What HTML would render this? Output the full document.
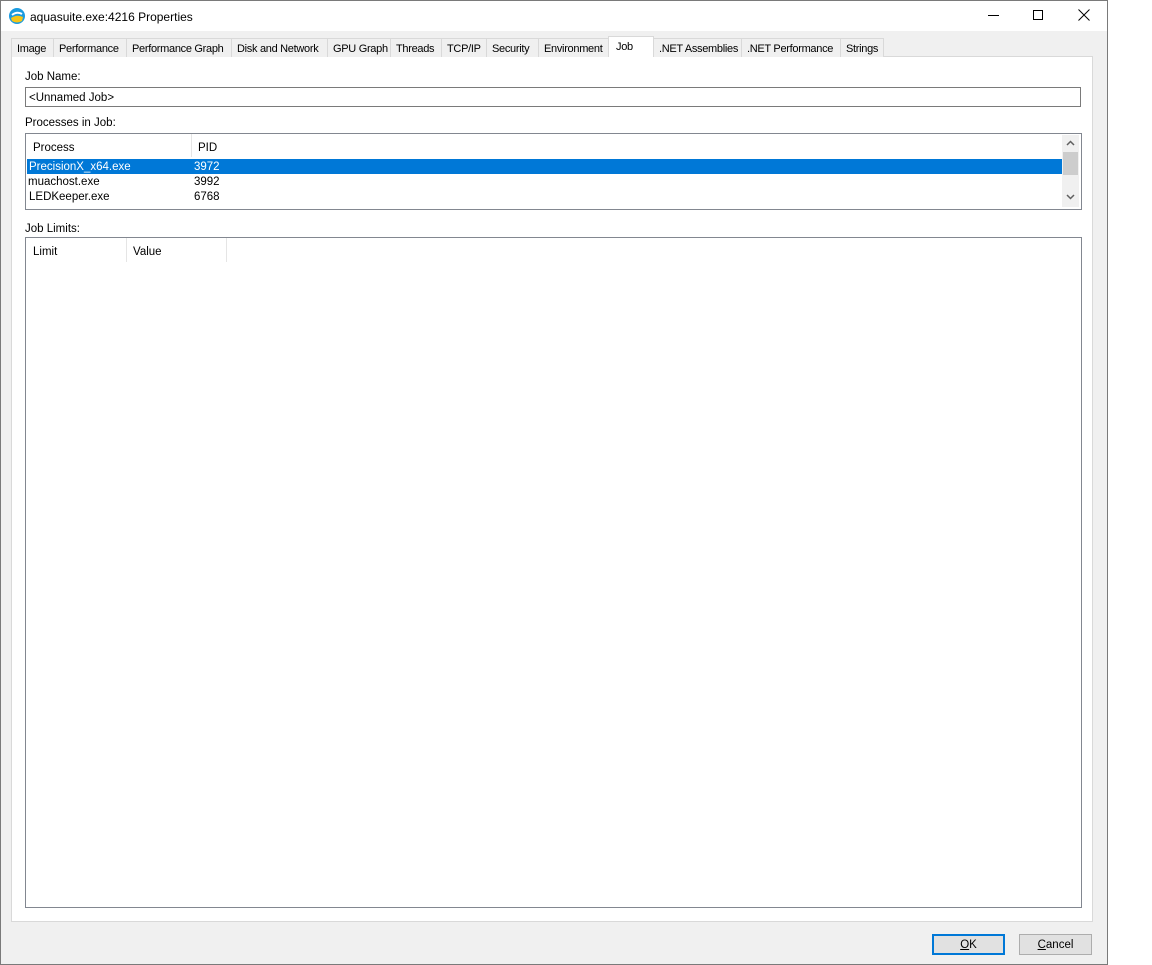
<!DOCTYPE html>
<html><head><style>
*{box-sizing:border-box;margin:0;padding:0}
body{width:1152px;height:965px;background:#fff;position:relative;overflow:hidden;font-family:"Liberation Sans",sans-serif;font-size:11.5px;color:#000}
.a{position:absolute}
.win{left:0;top:0;width:1108px;height:965px;background:#f0f0f0;border:1px solid #7a7a7a;border-top:1px solid #7a7a7a}
.title{left:1px;top:1px;width:1106px;height:30px;background:#fff}
.tab{top:38px;height:19px;border:1px solid #d9d9d9;border-bottom:none;background:#f0f0f0;padding:4px 0 0 5px;white-space:nowrap;font-size:11px;letter-spacing:-0.3px;overflow:hidden}
.panel{left:11px;top:56px;width:1082px;height:866px;background:#fff;border:1px solid #d9d9d9}
.box{border:1px solid #828790;background:#fff}
.btn{top:934px;width:73px;height:21px;background:#e1e1e1;border:1px solid #adadad;text-align:center;padding-top:4px}
.t{margin-top:1px}
</style></head><body>
<div class="a win"></div>
<div class="a title"></div>
<svg class="a" style="left:8px;top:7px" width="18" height="18" viewBox="0 0 18 18"><circle cx="9" cy="9" r="8" fill="#1a9be0"/><path d="M3 11 Q9 7 15 10 L14 14 Q9 17 4 14Z" fill="#f5c518"/><path d="M4 8 Q9 4 14 7" stroke="#fff" stroke-width="2" fill="none"/></svg>
<div class="a" style="left:30px;top:10px;font-size:12px">aquasuite.exe:4216 Properties</div>
<div class="a" style="left:988px;top:15px;width:11px;height:1px;background:#000"></div>
<div class="a" style="left:1033px;top:10px;width:10px;height:10px;border:1px solid #000"></div>
<svg class="a" style="left:1078px;top:9px" width="12" height="12"><path d="M0.5 0.5L11.5 11.5M11.5 0.5L0.5 11.5" stroke="#000"/></svg>
<div class="a panel"></div>
<div class="a tab" style="left:11px;width:43px">Image</div>
<div class="a tab" style="left:53px;width:74px">Performance</div>
<div class="a tab" style="left:126px;width:106px">Performance Graph</div>
<div class="a tab" style="left:231px;width:97px">Disk and Network</div>
<div class="a tab" style="left:327px;width:64px">GPU Graph</div>
<div class="a tab" style="left:390px;width:52px">Threads</div>
<div class="a tab" style="left:441px;width:46px">TCP/IP</div>
<div class="a tab" style="left:486px;width:53px">Security</div>
<div class="a tab" style="left:538px;width:71px">Environment</div>
<div class="a tab" style="left:608px;top:36px;width:46px;height:21px;background:#fff;padding-top:4px;padding-left:7px">Job</div>
<div class="a tab" style="left:653px;width:89px">.NET Assemblies</div>
<div class="a tab" style="left:741px;width:100px">.NET Performance</div>
<div class="a tab" style="left:840px;width:44px">Strings</div>
<div class="a" style="left:25px;top:71px">Job Name:</div>
<div class="a box" style="left:25px;top:87px;width:1056px;height:20px;border-color:#7a7a7a;padding:4px 0 0 3px">&lt;Unnamed Job&gt;</div>
<div class="a" style="left:25px;top:117px">Processes in Job:</div>
<div class="a box" style="left:25px;top:133px;width:1057px;height:77px"></div>
<div class="a" style="left:33px;top:142px">Process</div>
<div class="a" style="left:191px;top:134px;width:1px;height:23px;background:#e5e5e5"></div>
<div class="a" style="left:198px;top:142px">PID</div>
<div class="a" style="left:27px;top:159px;width:1035px;height:15px;background:#0078d7"></div>
<div class="a" style="left:29px;top:161px;color:#fff">PrecisionX_x64.exe</div>
<div class="a" style="left:194px;top:161px;color:#fff">3972</div>
<div class="a" style="left:28px;top:176px">muachost.exe</div>
<div class="a" style="left:194px;top:176px">3992</div>
<div class="a" style="left:29px;top:191px">LEDKeeper.exe</div>
<div class="a" style="left:194px;top:191px">6768</div>
<div class="a" style="left:1062px;top:135px;width:17px;height:72px;background:#f0f0f0"></div>
<div class="a" style="left:1063px;top:152px;width:15px;height:23px;background:#cdcdcd"></div>
<svg class="a" style="left:1066px;top:140px" width="10" height="60"><path d="M1 5L4.5 1.5L8 5M1 55L4.5 58.5L8 55" stroke="#606060" stroke-width="1.5" fill="none"/></svg>
<div class="a" style="left:25px;top:223px">Job Limits:</div>
<div class="a box" style="left:25px;top:237px;width:1057px;height:671px"></div>
<div class="a" style="left:33px;top:246px">Limit</div>
<div class="a" style="left:126px;top:238px;width:1px;height:24px;background:#e5e5e5"></div>
<div class="a" style="left:133px;top:246px">Value</div>
<div class="a" style="left:226px;top:238px;width:1px;height:24px;background:#e5e5e5"></div>
<div class="a btn" style="left:932px;border:2px solid #0078d7;padding-top:3px"><u>O</u>K</div>
<div class="a btn" style="left:1019px"><u>C</u>ancel</div>
</body></html>
